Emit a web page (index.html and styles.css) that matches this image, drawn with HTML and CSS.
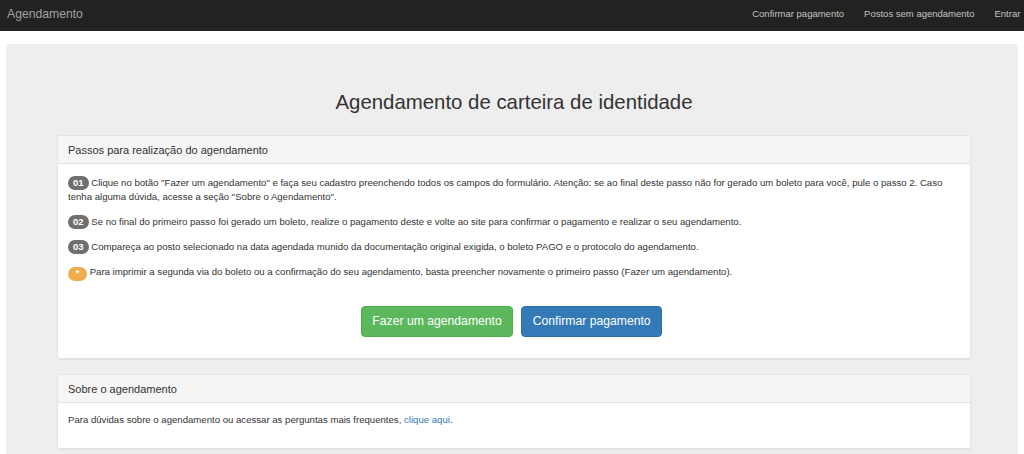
FILE: index.html
```html
<!DOCTYPE html>
<html lang="pt-BR">
<head>
<meta charset="utf-8">
<title>Agendamento</title>
<link rel="stylesheet" href="styles.css">
</head>
<body>
<nav class="navbar">
  <a class="brand" href="#">Agendamento</a>
  <ul class="nav-links">
    <li><a href="#">Confirmar pagamento</a></li>
    <li><a href="#">Postos sem agendamento</a></li>
    <li><a href="#">Entrar <span class="caret"></span></a></li>
  </ul>
</nav>
<main class="container">
  <section class="jumbotron">
    <h2 class="title">Agendamento de carteira de identidade</h2>
    <div class="panel">
      <div class="panel-heading">Passos para realização do agendamento</div>
      <div class="panel-body steps">
        <p><span class="badge">01</span> Clique no botão "Fazer um agendamento" e faça seu cadastro preenchendo todos os campos do formulário. Atenção: se ao final deste passo não for gerado um boleto para você, pule o passo 2. Caso tenha alguma dúvida, acesse a seção "Sobre o Agendamento".</p>
        <p><span class="badge">02</span> Se no final do primeiro passo foi gerado um boleto, realize o pagamento deste e volte ao site para confirmar o pagamento e realizar o seu agendamento.</p>
        <p><span class="badge">03</span> Compareça ao posto selecionado na data agendada munido da documentação original exigida, o boleto PAGO e o protocolo do agendamento.</p>
        <p><span class="badge badge-warning">*</span> Para imprimir a segunda via do boleto ou a confirmação do seu agendamento, basta preencher novamente o primeiro passo (Fazer um agendamento).</p>
        <div class="actions">
          <a class="btn btn-success" href="#">Fazer um agendamento</a>
          <a class="btn btn-primary" href="#">Confirmar pagamento</a>
        </div>
      </div>
    </div>
    <div class="panel">
      <div class="panel-heading">Sobre o agendamento</div>
      <div class="panel-body">
        <p>Para dúvidas sobre o agendamento ou acessar as perguntas mais frequentes, <a class="link" href="#">clique aqui</a>.</p>
      </div>
    </div>
  </section>
</main>
</body>
</html>
```
FILE: styles.css
```css
* { box-sizing: border-box; }
html, body {
  margin: 0;
  padding: 0;
  overflow: hidden;
}
body {
  font-family: "Liberation Sans", Arial, sans-serif;
  font-size: 9.6px;
  line-height: 14px;
  color: #333;
  background: #fff;
}
a { text-decoration: none; }

.navbar {
  height: 31px;
  background: #222;
  display: flex;
  align-items: center;
  justify-content: space-between;
  overflow: hidden;
  padding-bottom: 3px;
}
.brand {
  font-size: 12.2px;
  line-height: 14px;
  color: #a2a2a2;
  padding-left: 7px;
}
.nav-links {
  list-style: none;
  margin: 0 -17px 0 0;
  padding: 0;
  display: flex;
  flex-shrink: 0;
}
.nav-links a {
  display: block;
  padding: 0 10px;
  color: #c4c4c4;
  font-size: 9.5px;
  line-height: 14px;
  white-space: nowrap;
}
.caret {
  display: inline-block;
  width: 0;
  height: 0;
  margin-left: 2px;
  vertical-align: middle;
  border-top: 3px solid #c4c4c4;
  border-left: 3px solid transparent;
  border-right: 3px solid transparent;
}

.container {
  margin: 13px 6px 0 6px;
}
.jumbotron {
  background: #eee;
  border-radius: 4px;
  padding: 47px 47px 40px 51px;
  min-height: 420px;
}
.title {
  margin: 0 0 22px 0;
  font-size: 20.4px;
  line-height: 22px;
  font-weight: 400;
  text-align: center;
  color: #333;
}
.panel {
  background: #fff;
  border: 1px solid #e3e3e3;
  border-radius: 3px;
  box-shadow: 0 1px 1px rgba(0,0,0,0.05);
  margin-bottom: 15px;
}
.panel-heading {
  background: #f5f5f5;
  border-bottom: 1px solid #e3e3e3;
  border-radius: 3px 3px 0 0;
  height: 28px;
  padding: 0 10px;
  display: flex;
  align-items: center;
  font-size: 11px;
  color: #333;
}
.panel-body {
  padding: 10px;
}
.panel-body.steps {
  padding-top: 12px;
}
.panel-body p {
  margin: 0 0 11px 0;
}
.badge {
  display: inline-block;
  min-width: 10px;
  padding: 2.5px 5px 2px 5px;
  font-size: 9.5px;
  font-weight: 700;
  line-height: 9.5px;
  color: #fff;
  text-align: center;
  white-space: nowrap;
  vertical-align: 0;
  background: #6f6f6f;
  border-radius: 8px;
  margin: -2px 0;
}
.badge-warning {
  background: #f0ad4e;
  min-width: 19px;
  font-size: 9px;
  vertical-align: -1px;
}
.actions {
  display: flex;
  justify-content: center;
  gap: 8px;
  padding-top: 16px;
  padding-right: 5px;
  margin-bottom: 11px;
}
.btn {
  display: inline-block;
  padding: 0 10.5px;
  height: 31px;
  line-height: 29px;
  font-size: 12.2px;
  color: #fff;
  border: 1px solid transparent;
  border-radius: 4px;
  white-space: nowrap;
}
.btn-success {
  background: #5cb85c;
  border-color: #4cae4c;
}
.btn-primary {
  background: #337ab7;
  border-color: #2e6da4;
}
.link {
  color: #337ab7;
}
```
